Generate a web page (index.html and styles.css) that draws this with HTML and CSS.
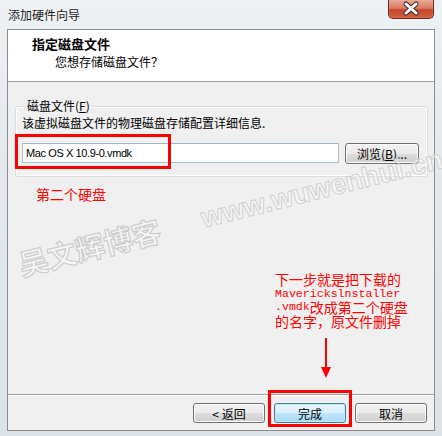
FILE: index.html
```html
<!DOCTYPE html>
<html lang="zh-CN">
<head>
<meta charset="utf-8">
<title>添加硬件向导</title>
<link rel="stylesheet" href="styles.css">
</head>
<body>
<div class="window">
  <div class="titlebar">
    <span class="title">添加硬件向导</span>
    <div class="close">
      <svg width="46" height="19" viewBox="0 0 46 19">
        <path d="M18 5 L28 14 M28 5 L18 14" stroke="#3a2a28" stroke-width="5" stroke-linecap="round"/>
        <path d="M18 5 L28 14 M28 5 L18 14" stroke="#ffffff" stroke-width="3" stroke-linecap="round"/>
      </svg>
    </div>
  </div>
  <div class="client">
    <div class="header">
      <div class="h-title">指定磁盘文件</div>
      <div class="h-sub">您想存储磁盘文件？</div>
    </div>
    <div class="main">
      <fieldset class="group">
        <legend>磁盘文件(<u>F</u>)</legend>
        <div class="desc">该虚拟磁盘文件的物理磁盘存储配置详细信息.</div>
        <div class="row">
          <div class="input">Mac OS X 10.9-0.vmdk</div>
          <button class="btn browse">浏览(<u>B</u>)...</button>
        </div>
      </fieldset>
      <div class="note">第二个硬盘</div>
      <div class="wm wm-url">www.wuwenhui.cn</div>
      <div class="wm wm-name">吴文辉博客</div>
      <div class="hl hl-input"></div>
      <div class="annot">
        <div class="aline">下一步就是把下载的</div>
        <div class="aline mono">Maverickslnstaller</div>
        <div class="aline"><span class="mono">.vmdk</span>改成第二个硬盘</div>
        <div class="aline">的名字，原文件删掉</div>
      </div>
      <svg class="arrow" width="12" height="41" viewBox="0 0 12 41">
        <rect x="5" y="0" width="2" height="31" fill="#ff0000"/>
        <path d="M1 29 L11 29 L6 40 Z" fill="#ff0000"/>
      </svg>
    </div>
    <div class="footer">
      <button class="btn">&lt; 返回</button>
      <button class="btn default">完成</button>
      <button class="btn">取消</button>
      <div class="hl hl-finish"></div>
    </div>
  </div>
</div>
</body>
</html>
```

FILE: styles.css
```css
html, body {
  margin: 0;
  padding: 0;
}
body {
  width: 442px;
  height: 436px;
  overflow: hidden;
  background: #e4e8ec;
  font-family: "Liberation Sans", "Noto Sans CJK SC", sans-serif;
  font-size: 12px;
  color: #000;
}
.window {
  width: 442px;
  height: 436px;
  background: linear-gradient(180deg, #eef1f4 0%, #e6eaee 30%, #dde2e7 100%);
  box-sizing: border-box;
}
.titlebar {
  height: 29px;
  display: flex;
  justify-content: space-between;
  align-items: flex-start;
}
.title {
  margin-left: 8px;
  margin-top: 6px;
  font-family: "Noto Sans CJK SC", sans-serif;
  font-size: 12px;
  line-height: 17px;
  color: #1a1a1a;
  text-shadow: 0 0 4px #ffffff;
}
.close {
  width: 46px;
  height: 19px;
  margin-right: 8px;
  box-sizing: border-box;
  border: 1px solid #6b2a20;
  border-top: none;
  border-radius: 0 0 5px 5px;
  background: linear-gradient(180deg, #e9a898 0%, #dc7c63 45%, #c7452c 55%, #d3613f 100%);
  box-shadow: inset 0 0 1px #ffd8cc;
  overflow: hidden;
}
.close svg {
  display: block;
  margin: -1px 0 0 -1px;
}
.client {
  margin-left: 7px;
  width: 428px;
  height: 402px;
  box-sizing: border-box;
  border: 1px solid #8c8c8c;
  display: flex;
  flex-direction: column;
  background: #f0f0f0;
}
.header {
  height: 51px;
  background: #ffffff;
  border-bottom: 1px solid #a0a0a0;
  box-sizing: content-box;
  font-family: "Noto Sans CJK SC", sans-serif;
}
.h-title {
  margin: 6px 0 0 24px;
  font-size: 13px;
  font-weight: bold;
  line-height: 16px;
}
.h-sub {
  margin: 1px 0 0 47px;
  font-size: 12px;
  line-height: 17px;
}
.main {
  position: relative;
  height: 312px;
  padding: 16px 6px 0 7px;
  box-sizing: border-box;
  font-family: "Noto Sans CJK SC", sans-serif;
}
.group {
  margin: 0;
  padding: 0 8px 12px 6px;
  border: 1px solid #d5dfe5;
  border-radius: 3px;
  box-shadow: inset 0 0 0 1px #ffffff;
}
.group legend {
  padding: 0 1px;
  margin-left: 4px;
  line-height: 16px;
  font-size: 12px;
}
.desc {
  margin-top: 1px;
  line-height: 16px;
}
.row {
  margin-top: 12px;
  display: flex;
  align-items: flex-start;
  gap: 6px;
}
.input {
  width: 317px;
  height: 20px;
  box-sizing: border-box;
  border: 1px solid #abc1d6;
  border-top-color: #9eb4c9;
  background: #ffffff;
  padding: 0 0 0 3px;
  font-family: "Liberation Sans", sans-serif;
  font-size: 11px;
  letter-spacing: -0.4px;
  line-height: 18px;
}
.btn {
  width: 72px;
  height: 20px;
  margin: 0;
  padding: 0;
  box-sizing: border-box;
  border: 1px solid #707070;
  border-radius: 3px;
  background: linear-gradient(180deg, #f2f2f2 0%, #ebebeb 50%, #dddddd 51%, #cfcfcf 100%);
  box-shadow: inset 0 0 0 1px #fcfcfc;
  font-family: "Noto Sans CJK SC", "Liberation Sans", sans-serif;
  font-size: 12px;
  line-height: 17px;
  color: #000;
}
.browse {
  width: 74px;
  height: 21px;
}
.btn.default {
  border-color: #3c7fb1;
  background: linear-gradient(180deg, #eaf6fd 0%, #d9f0fc 50%, #bee6fd 51%, #a7d9f5 100%);
  box-shadow: inset 0 0 0 1px #c6e8fb;
}
.note {
  margin: 9px 0 0 21px;
  color: #ff0000;
  font-size: 14px;
  line-height: 16px;
}
.wm {
  position: absolute;
  color: rgba(255, 255, 255, 0.45);
  -webkit-text-stroke: 1px #d0d0d0;
  font-weight: bold;
  white-space: nowrap;
  transform: rotate(-14deg);
  transform-origin: center;
}
.wm-url {
  left: 190px;
  top: 91px;
  font-family: "Liberation Sans", sans-serif;
  font-size: 28px;
  line-height: 32px;
}
.wm-name {
  left: 9px;
  top: 148px;
  font-family: "Noto Sans CJK SC", sans-serif;
  font-size: 29px;
  line-height: 32px;
  font-weight: bold;
  -webkit-text-stroke: 1.2px #cdcdcd;
}
.hl {
  position: absolute;
  border: 3px solid #ff0000;
  box-sizing: border-box;
}
.hl-input {
  left: 7px;
  top: 52px;
  width: 156px;
  height: 35px;
}
.annot {
  position: absolute;
  left: 267px;
  top: 190px;
  color: #ff0000;
  font-family: "Noto Sans CJK SC", sans-serif;
  font-size: 14px;
  white-space: nowrap;
}
.aline {
  height: 14px;
  line-height: 14px;
  overflow: visible;
}
.annot .mono {
  font-family: "Liberation Mono", monospace;
  font-size: 11.6px;
  line-height: 14px;
  vertical-align: top;
}
.aline.mono {
  padding-top: 1px;
  height: 13px;
}
.arrow {
  position: absolute;
  left: 312px;
  top: 256px;
}
.footer {
  position: relative;
  flex: 1;
  border-top: 1px solid #a0a0a0;
  display: flex;
  justify-content: flex-end;
  align-items: flex-start;
  gap: 9px;
  padding: 8px 7px 0 0;
  box-shadow: inset 0 1px 0 #ffffff;
}
.hl-finish {
  left: 260px;
  top: -5px;
  width: 84px;
  height: 37px;
}
```
